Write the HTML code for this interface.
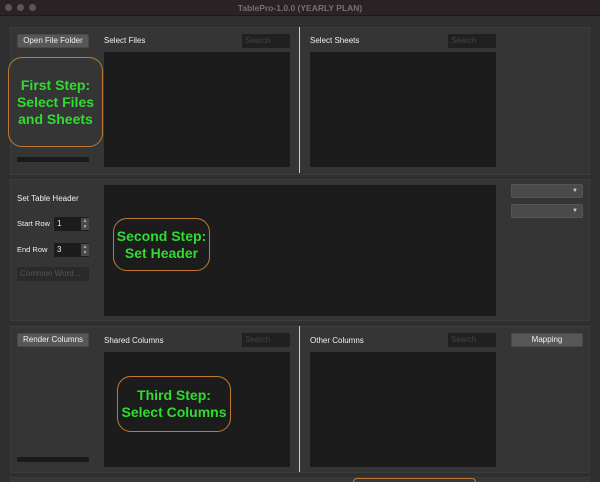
<html style="overflow:hidden;width:600px;height:482px"><head><style>
body{margin:0;width:600px;height:482px;overflow:hidden;background:#2f2f2f;font-family:"Liberation Sans",sans-serif;position:relative}
div{position:absolute;box-sizing:border-box}
.t{color:#f0f0f0;font-size:8px;white-space:nowrap}
.btn{background:#575757;border:1px solid #4a4a4a;border-radius:2px;color:#f0f0f0;font-size:8px;text-align:center;line-height:12px}
.list{background:#1c1c1c}
.srch{background:#202020;color:#444;font-size:8px;line-height:13px;padding-left:3px}
.panel{background:#353535;border:1px solid #3c3c3c}
.call{border:1.3px solid #c07a34;border-radius:14px;color:#2fdc2f;font-weight:bold;text-align:center;display:flex;align-items:center;justify-content:center;font-size:14px;line-height:17px}
.sep{background:#d0d0d0;width:1px}
.bar{background:#1a1a1a;height:5px;border-radius:1px}
.dd{background:#4a4a4a;border:1px solid #555;border-radius:2px;color:#ccc;font-size:6px;text-align:right;padding-right:4px;line-height:12px}
</style></head><body>
<div style="left:0;top:0;width:600px;height:16px;background:#2a2326;border-bottom:1px solid #1a1a1a"></div>
<div style="left:5px;top:4px;width:7px;height:7px;border-radius:50%;background:#5a5558"></div>
<div style="left:17px;top:4px;width:7px;height:7px;border-radius:50%;background:#5a5558"></div>
<div style="left:29px;top:4px;width:7px;height:7px;border-radius:50%;background:#5a5558"></div>
<div style="left:0;top:3px;width:600px;text-align:center;color:#77706f;font-size:8.5px;font-weight:bold">TablePro-1.0.0 (YEARLY PLAN)</div>

<div class="panel" style="left:10px;top:27px;width:580px;height:148px"></div>
<div class="panel" style="left:10px;top:179px;width:580px;height:142px"></div>
<div class="panel" style="left:10px;top:326px;width:580px;height:147px"></div>
<div class="panel" style="left:10px;top:477px;width:580px;height:5px"></div>

<div class="btn" style="left:17px;top:34px;width:72px;height:14px">Open File Folder</div>
<div class="t" style="left:104px;top:36px">Select Files</div>
<div class="srch" style="left:242px;top:34px;width:48px;height:14px">Search</div>
<div class="list" style="left:104px;top:52px;width:186px;height:115px"></div>
<div class="call" style="left:8px;top:57px;width:95px;height:90px">First Step:<br>Select Files<br>and Sheets</div>
<div class="bar" style="left:17px;top:157px;width:72px"></div>
<div class="sep" style="left:299px;top:27px;height:146px"></div>
<div class="t" style="left:310px;top:36px">Select Sheets</div>
<div class="srch" style="left:448px;top:34px;width:48px;height:14px">Search</div>
<div class="list" style="left:310px;top:52px;width:186px;height:115px"></div>

<div class="t" style="left:17px;top:194px">Set Table Header</div>
<div class="t" style="left:17px;top:219px;font-size:7.5px">Start Row</div>
<div style="left:54px;top:217px;width:35px;height:14px;background:#1c1c1c;color:#eee;font-size:8px;line-height:14px;padding-left:3px">1</div>
<div style="left:81px;top:218px;width:8px;height:12px;background:#4a4a4a;color:#aaa;font-size:5px;text-align:center;line-height:6px">▲<br>▼</div>
<div class="t" style="left:17px;top:245px;font-size:7.5px">End Row</div>
<div style="left:54px;top:243px;width:35px;height:14px;background:#1c1c1c;color:#eee;font-size:8px;line-height:14px;padding-left:3px">3</div>
<div style="left:81px;top:244px;width:8px;height:12px;background:#4a4a4a;color:#aaa;font-size:5px;text-align:center;line-height:6px">▲<br>▼</div>
<div class="srch" style="left:17px;top:267px;width:72px;height:14px;background:#2a2a2a;color:#555">Common Word...</div>
<div class="list" style="left:104px;top:185px;width:392px;height:131px"></div>
<div class="call" style="left:113px;top:218px;width:97px;height:53px">Second Step:<br>Set Header</div>
<div class="dd" style="left:511px;top:184px;width:72px;height:14px">▼</div>
<div class="dd" style="left:511px;top:204px;width:72px;height:14px">▼</div>

<div class="btn" style="left:17px;top:333px;width:72px;height:14px">Render Columns</div>
<div class="t" style="left:104px;top:336px">Shared Columns</div>
<div class="srch" style="left:242px;top:333px;width:48px;height:14px">Search</div>
<div class="list" style="left:104px;top:352px;width:186px;height:115px"></div>
<div class="call" style="left:117px;top:376px;width:114px;height:56px">Third Step:<br>Select Columns</div>
<div class="bar" style="left:17px;top:457px;width:72px"></div>
<div class="sep" style="left:299px;top:326px;height:146px"></div>
<div class="t" style="left:310px;top:336px">Other Columns</div>
<div class="srch" style="left:448px;top:333px;width:48px;height:14px">Search</div>
<div class="list" style="left:310px;top:352px;width:186px;height:115px"></div>
<div class="btn" style="left:511px;top:333px;width:72px;height:14px">Mapping</div>
<div style="left:353px;top:478px;width:123px;height:4px;border:1.3px solid #c07a34;border-bottom:none;border-radius:12px 12px 0 0"></div>
</body></html>
